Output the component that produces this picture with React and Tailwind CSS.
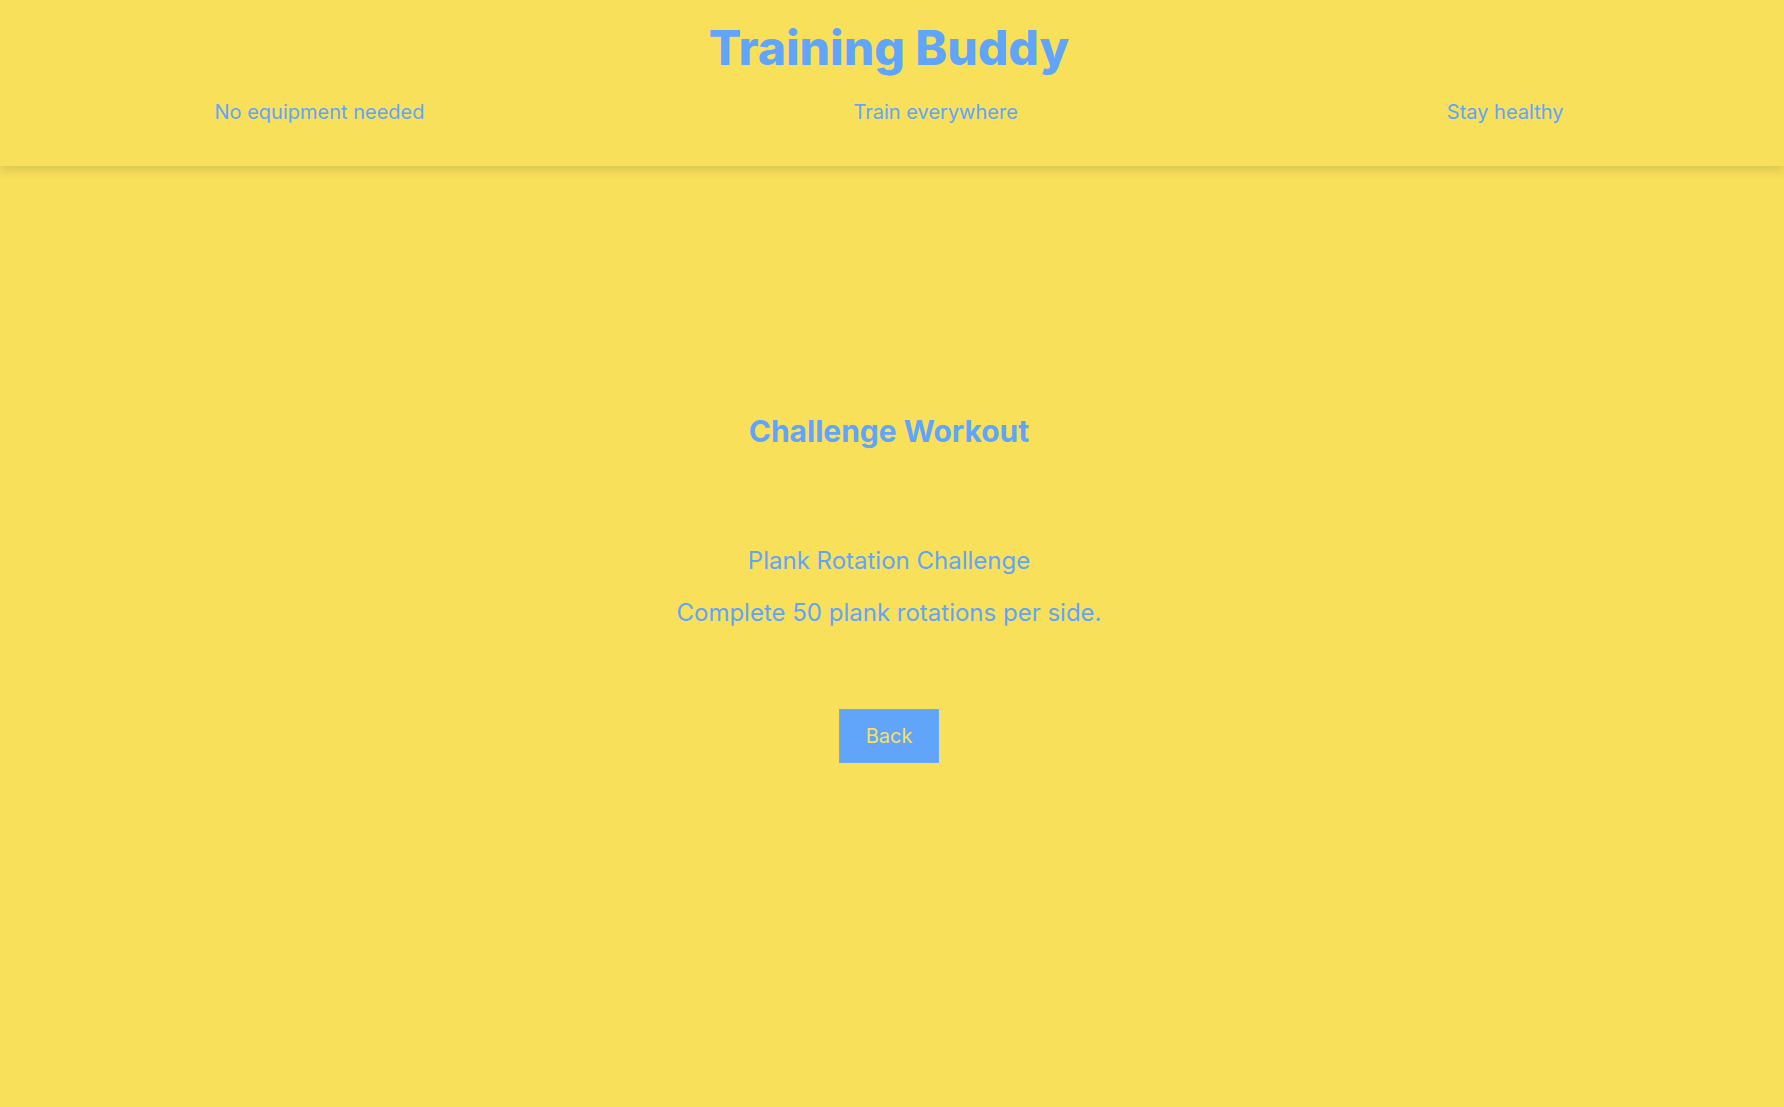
export default function App() {
  return (
    <div className="min-h-screen w-full bg-[#f8e05b] text-[#60a5fa]" style={{ fontFamily: 'Inter, "Noto Sans", sans-serif' }}>
      <header className="w-full bg-[#f8e05b] shadow-[0_4px_10px_rgba(0,0,0,0.13)]">
        <div className="w-[calc(100%-6px)] pt-[24px] pb-[40px]">
          <h1 className="text-center text-5xl font-extrabold leading-none">Training Buddy</h1>
          <nav className="mt-[26px] flex justify-around text-xl leading-7">
            <span>No equipment needed</span>
            <span>Train everywhere</span>
            <span>Stay healthy</span>
          </nav>
        </div>
      </header>
      <main className="w-[calc(100%-6px)] pt-[247px] pb-[100px] flex flex-col items-center">
        <h2 className="text-3xl leading-9 font-bold">Challenge Workout</h2>
        <p className="mt-[96px] text-2xl leading-8">Plank Rotation Challenge</p>
        <p className="mt-[20px] text-2xl leading-8">Complete 50 plank rotations per side.</p>
        <button className="mt-[80px] bg-[#60a5fa] border border-[#6aaaf8] text-[#f8e05b] text-xl leading-7 px-[26px] py-[12px]">
          Back
        </button>
      </main>
    </div>
  );
}
